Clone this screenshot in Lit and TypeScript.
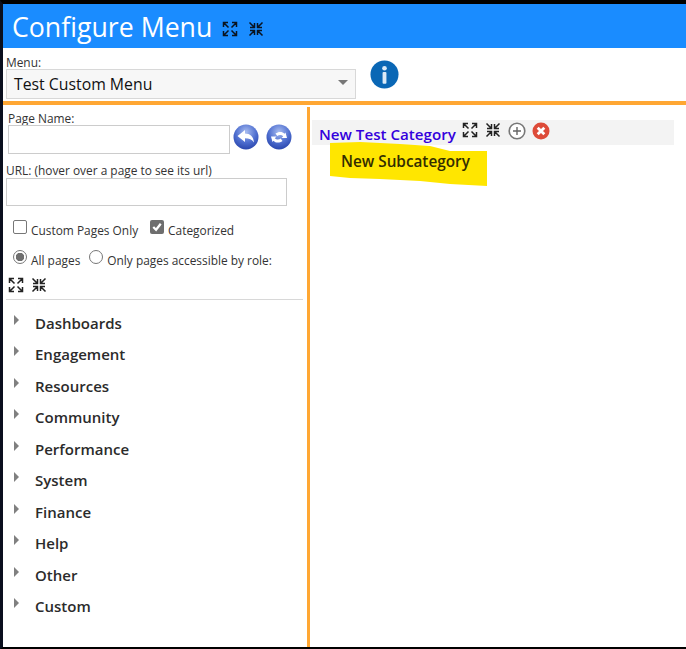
import { LitElement, html, css, svg } from 'lit';
import { customElement } from 'lit/decorators.js';

const CATEGORIES = ['Dashboards', 'Engagement', 'Resources', 'Community', 'Performance', 'System', 'Finance', 'Help', 'Other', 'Custom'];

const expandIcon = (color: string) => html`<svg class="tool" viewBox="0 0 16 16" fill="none" stroke=${color} stroke-width="1.500">
  <path d="M1.500 6V1.500H6M1.500 1.500l5 5M10 1.500h4.500V6M14.500 1.500l-5 5M1.500 10v4.500H6M1.500 14.500l5-5M10 14.500h4.500V10M14.500 14.500l-5-5"/>
</svg>`;

const compressIcon = (color: string) => html`<svg class="tool" viewBox="0 0 16 16" fill="none" stroke=${color} stroke-width="1.500">
  <path d="M6.500 2v4.500H2M6.500 6.500l-5-5M9.500 2v4.500H14M9.500 6.500l5-5M6.500 14V9.500H2M6.500 9.500l-5 5M9.500 14V9.500H14M9.500 9.500l5 5"/>
</svg>`;

const blueBall = (id: string, glyph: unknown) => html`<svg class="ball" viewBox="0 0 26 26">
  <defs>
    <radialGradient id=${id} cx="50%" cy="30%" r="75%">
      <stop offset="0" stop-color="#a9bdf0" />
      <stop offset="0.55" stop-color="#4f6fd0" />
      <stop offset="1" stop-color="#2440a8" />
    </radialGradient>
  </defs>
  <circle cx="13" cy="13" r="12.500" fill="url(#${id})" />
  ${glyph}
</svg>`;

const backGlyph = svg`<path fill="#fff" d="M4.500 12 12 6v3.600c5 0 8.500 3 9 9-2-3.200-4.800-4.400-9-4.400V18z" />`;
const refreshGlyph = svg`<path fill="#fff" d="M19.500 8.500 21 14h-5.500l1.700-1.700c-1.600-1.700-4.200-1.800-5.900-.4L9.500 9.600c3-2.400 7-2.200 9 .2zM6.500 18 5 12.500h5.500l-1.700 1.700c1.600 1.700 4.200 1.800 5.900.4l1.800 2.300c-3 2.400-7 2.200-9-.2z" />`;

@customElement('app-root')
export class AppRoot extends LitElement {
  static styles = css`
    :host {
      display: flex;
      flex-direction: column;
      box-sizing: border-box;
      width: 686px;
      height: 649px;
      border-top: 4px solid #000;
      border-left: 3px solid #0a0f1e;
      border-bottom: 2px solid #000;
      background: #fff;
      color: #222;
      font-family: 'Open Sans', 'Noto Sans', sans-serif;
      overflow: hidden;
    }

    .tool {
      display: block;
      width: 16px;
      height: 16px;
      flex: none;
    }

    .header {
      display: flex;
      align-items: center;
      gap: 10px;
      height: 44px;
      padding: 0 0 0 9px;
      background: #1a8cff;
      color: #fff;
      font-size: 26.700px;
      flex: none;
    }

    .header .tools {
      display: flex;
      gap: 10px;
      margin-top: 6px;
    }

    .menu-bar {
      display: flex;
      align-items: flex-start;
      height: 53px;
      padding: 7px 0 0 3px;
      box-sizing: border-box;
      flex: none;
    }

    .menu-label {
      font-size: 11.900px;
      line-height: 14px;
      color: #333;
    }

    .select {
      display: flex;
      align-items: center;
      justify-content: space-between;
      box-sizing: border-box;
      width: 350px;
      height: 30px;
      padding: 0 7px;
      border: 1px solid #d8d8d8;
      background: #f7f7f7;
      font-size: 15.800px;
      color: #111;
    }

    .caret {
      width: 0;
      height: 0;
      margin-top: -3px;
      border-left: 5px solid transparent;
      border-right: 5px solid transparent;
      border-top: 5px solid #777;
    }

    .info {
      width: 29px;
      height: 29px;
      margin: 5px 0 0 14px;
      flex: none;
    }

    .columns {
      display: flex;
      flex: 1;
      min-height: 0;
      border-top: 4px solid #ffa733;
    }

    .left {
      box-sizing: border-box;
      width: 304px;
      padding: 6px 0 0 3px;
      flex: none;
      font-size: 11.900px;
      color: #333;
    }

    .divider-v {
      width: 3px;
      margin-top: 2px;
      background: #ffa733;
      flex: none;
    }

    .field-label {
      line-height: 14px;
      padding-left: 2px;
    }

    .name-row {
      display: flex;
      align-items: flex-start;
      gap: 3px;
      margin-left: 2px;
    }

    input {
      display: block;
      box-sizing: border-box;
      border: 1px solid #ccc;
      background: #fff;
      padding: 0;
      margin: 0;
    }

    .name-input {
      width: 222px;
      height: 29px;
    }

    .ball {
      display: block;
      width: 26px;
      height: 26px;
      margin-top: -1px;
      flex: none;
    }

    .name-row .ball + .ball {
      margin-left: 4px;
    }

    .url-label {
      margin-top: 9px;
      line-height: 14px;
    }

    .url-input {
      width: 281px;
      height: 28px;
      margin-top: 1px;
    }

    .checks {
      display: flex;
      align-items: flex-end;
      gap: 12px;
      margin: 12px 0 0 7px;
      height: 19px;
    }

    .check {
      display: flex;
      align-items: flex-end;
      gap: 4px;
      line-height: 14px;
    }

    .box {
      box-sizing: border-box;
      width: 14px;
      height: 14px;
      margin-bottom: 3px;
      border: 1px solid #777;
      border-radius: 2px;
      background: #fff;
    }

    .box.on {
      display: block;
      background: #6e6e6e;
      border: 0;
    }

    .radios {
      display: flex;
      align-items: flex-end;
      gap: 9px;
      margin: 12px 0 0 7px;
      height: 18px;
    }

    .radio {
      display: flex;
      align-items: flex-end;
      gap: 4px;
      line-height: 14px;
    }

    .dot {
      box-sizing: border-box;
      width: 14px;
      height: 14px;
      margin-bottom: 3px;
      border: 1px solid #777;
      border-radius: 50%;
      background: #fff;
    }

    .dot.on {
      background: radial-gradient(circle, #6e6e6e 0 4px, #fff 4.500px);
    }

    .tree-tools {
      display: flex;
      gap: 7px;
      margin: 10px 0 0 2px;
    }

    .rule {
      height: 1px;
      margin: 6px 4px 0 0;
      background: #d8d8d8;
    }

    .tree {
      list-style: none;
      margin: 0;
      padding: 7px 0 0 8px;
    }

    .tree li {
      display: flex;
      align-items: center;
      height: 31.500px;
      font-size: 15px;
      font-weight: 600;
      color: #2b2b2b;
    }

    .arrow {
      width: 0;
      height: 0;
      margin: -6px 16px 0 0;
      border-top: 5px solid transparent;
      border-bottom: 5px solid transparent;
      border-left: 5px solid #808080;
    }

    .right {
      flex: 1;
      min-width: 0;
      padding: 15px 12px 0 2px;
    }

    .category {
      display: flex;
      align-items: center;
      height: 25px;
      padding-left: 7px;
      background: #f3f3f3;
      font-size: 15.150px;
      font-weight: 600;
      color: #3300dd;
    }

    .category .tool {
      margin: -5px 7px 0 0;
    }

    .category .title {
      margin: 3px 6px 0 0;
    }

    .category .round {
      display: block;
      width: 18px;
      height: 18px;
      margin: -4px 6px 0 0;
      flex: none;
    }

    .sub {
      position: relative;
      width: 157px;
      height: 44px;
      margin: -3px 0 0 18px;
      padding: 9px 0 0 11px;
      box-sizing: border-box;
      font-size: 15.300px;
      font-weight: 600;
      line-height: 20px;
      color: #332d00;
    }

    .sub svg {
      position: absolute;
      inset: 0;
      width: 157px;
      height: 44px;
      z-index: 0;
    }

    .sub span {
      position: relative;
    }
  `;

  render() {
    return html`
      <div class="header">
        <span>Configure Menu</span>
        <div class="tools">${expandIcon('#0a1420')}${compressIcon('#0a1420')}</div>
      </div>
      <div class="menu-bar">
        <div>
          <div class="menu-label">Menu:</div>
          <div class="select"><span>Test Custom Menu</span><span class="caret"></span></div>
        </div>
        <svg class="info" viewBox="0 0 30 30">
          <circle cx="15" cy="15" r="14.500" fill="#0a67b5" />
          <circle cx="15" cy="8.500" r="2.400" fill="#dbeaf7" />
          <rect x="13" y="12.500" width="4" height="12" rx="1" fill="#dbeaf7" />
        </svg>
      </div>
      <div class="columns">
        <div class="left">
          <div class="field-label">Page Name:</div>
          <div class="name-row">
            <input class="name-input" type="text" />
            ${blueBall('back-fill', backGlyph)}
            ${blueBall('refresh-fill', refreshGlyph)}
          </div>
          <div class="url-label">URL: (hover over a page to see its url)</div>
          <input class="url-input" type="text" />
          <div class="checks">
            <div class="check"><span class="box"></span><span>Custom Pages Only</span></div>
            <div class="check">
              <svg class="box on" viewBox="0 0 15 15"><path d="M3.500 7.500 6.500 10.500 11.500 4" fill="none" stroke="#fff" stroke-width="2.400" /></svg>
              <span>Categorized</span>
            </div>
          </div>
          <div class="radios">
            <div class="radio"><span class="dot on"></span><span>All pages</span></div>
            <div class="radio"><span class="dot"></span><span>Only pages accessible by role:</span></div>
          </div>
          <div class="tree-tools">${expandIcon('#222')}${compressIcon('#222')}</div>
          <div class="rule"></div>
          <ul class="tree">
            ${CATEGORIES.map((name) => html`<li><span class="arrow"></span><span>${name}</span></li>`)}
          </ul>
        </div>
        <div class="divider-v"></div>
        <div class="right">
          <div class="category">
            <span class="title">New Test Category</span>
            ${expandIcon('#222')}${compressIcon('#222')}
            <svg class="round" viewBox="0 0 18 18">
              <circle cx="9" cy="9" r="7.800" fill="#fff" stroke="#777" stroke-width="1.600" />
              <path d="M9 5v8M5 9h8" stroke="#666" stroke-width="1.400" />
            </svg>
            <svg class="round" viewBox="0 0 18 18">
              <circle cx="9" cy="9" r="8.500" fill="#dd4b39" />
              <path d="M5.700 5.700l6.600 6.600M12.300 5.700l-6.600 6.600" stroke="#fff" stroke-width="2.800" />
            </svg>
          </div>
          <div class="sub">
            <svg viewBox="0 0 157 44">
              <path fill="#ffe600" d="M0 1 30 0 70 2 100 4 120 9H157V44L120 42 90 39 50 37 20 36 0 34z" />
            </svg>
            <span>New Subcategory</span>
          </div>
        </div>
      </div>
    `;
  }
}

declare global {
  interface HTMLElementTagNameMap {
    'app-root': AppRoot;
  }
}
